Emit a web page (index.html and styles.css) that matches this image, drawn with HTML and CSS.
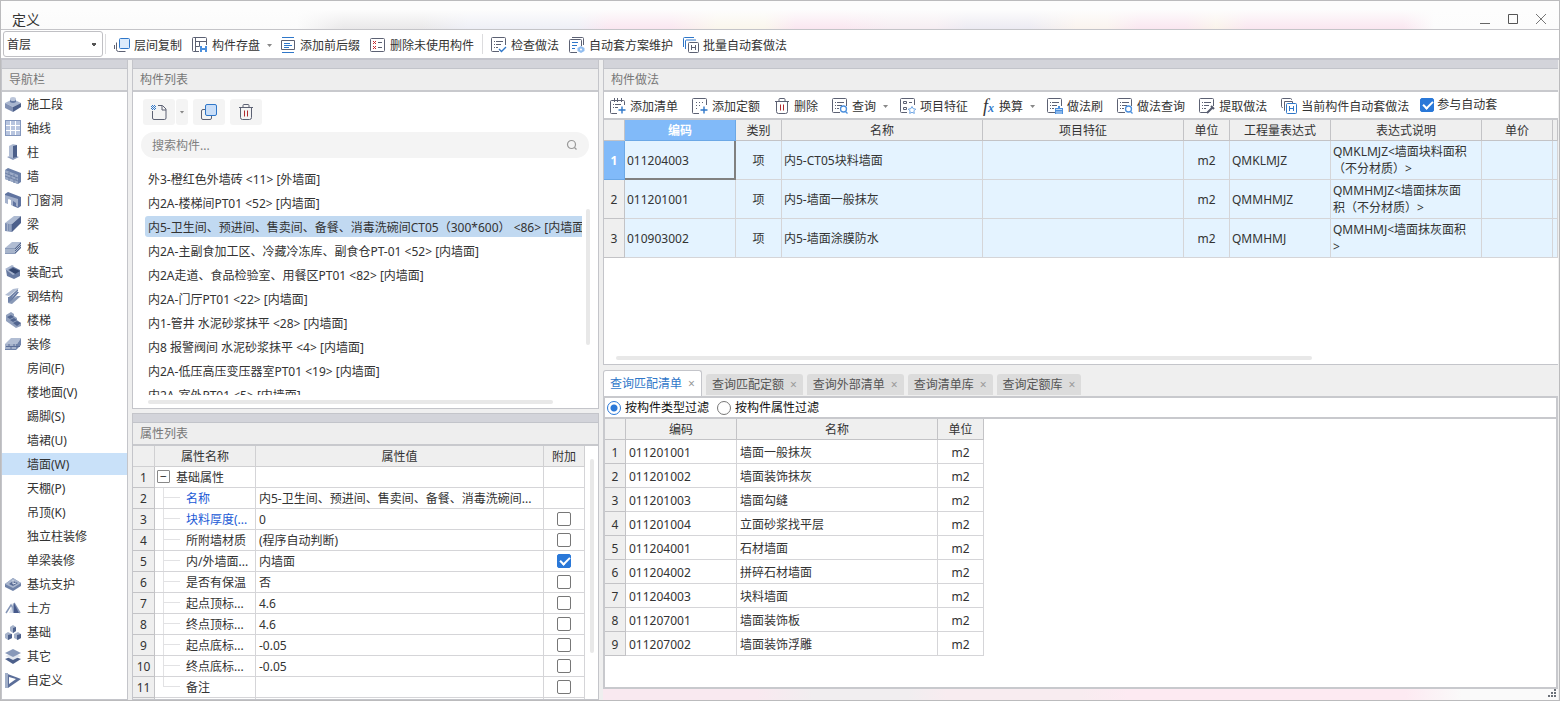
FILE: index.html
```html
<!DOCTYPE html>
<html lang="zh-CN">
<head>
<meta charset="utf-8">
<title>定义</title>
<link rel="stylesheet" href="styles.css">
</head>
<body>
<svg class="sprite" aria-hidden="true">
  <defs>
    <pattern id="dots" width="2" height="2" patternUnits="userSpaceOnUse"><path d="M0 0h1v1H0zM1 1h1v1H1z" fill="#2f77c9"/></pattern>
    <symbol id="i-layers" viewBox="0 0 16 16"><path d="M2.500 5.500v7q0 2 2 2h7M.5 8v4" class="k"/><rect x="5.500" y="1.500" width="10" height="10" rx="1" fill="#dcebfb" stroke="#2f77c9"/></symbol>
    <symbol id="i-store" viewBox="0 0 16 16"><path d="M7 14.500H1.500q-1 0-1-1v-12q0-1 1-1h12q1 0 1 1V8M3.500 1v13M3.500 4.500h11M7.500 4.500v5M3.500 9.500h4" class="k"/><path d="M8 9h7v6H8z" fill="#4b8fdd"/><path d="M10 9h3v2h-3zM10 13h3v2h-3z" fill="#fff"/></symbol>
    <symbol id="i-affix" viewBox="0 0 16 16"><path d="M1.500 3.500h13v9h-13z" class="k"/><path d="M4 6.500h6M4 8.500h8M4 10.500h5M2 .5h12M2 15.500h12" class="b"/></symbol>
    <symbol id="i-unused" viewBox="0 0 16 16"><rect x=".5" y="1.500" width="14" height="13" rx="1" class="k"/><path d="m3 4 3 3m0-3-3 3m0 2 3 3m0-3-3 3" stroke="#c6282c"/><path d="M8 5.500h4M8 10.500h4" class="k"/></symbol>
    <symbol id="i-doc" viewBox="0 0 16 16"><path d="M8 14.500H1.500q-1 0-1-1v-12q0-1 1-1h12q1 0 1 1V8" class="k"/><path d="M3 4.500h1M5 4.500h7M3 7.500h1M5 7.500h5M3 10.500h1M5 10.500h2" class="k"/></symbol>
    <symbol id="i-check" viewBox="0 0 16 16"><use href="#i-doc"/><path d="m8 12 2.500 2.500L15 10" class="b w"/></symbol>
    <symbol id="i-plan" viewBox="0 0 16 16"><path d="M8 15.500H1.500q-1 0-1-1v-11q0-1 1-1h10q1 0 1 1V9M3 .5h10.500q1 0 1 1V8" class="k"/><path d="M3 5.500h6M3 8.500h5M3 11.500h3" class="b"/><path d="M12 9 15.500 11v3L12 16l-3.500-2v-3z" fill="#91bdf0"/><circle cx="12" cy="12.500" r="1" fill="#fff"/></symbol>
    <symbol id="i-batch" viewBox="0 0 16 16"><path d="M.5 10V1.500q0-1 1-1H11M2.500 12V4q0-1 1-1H13" class="b"/><rect x="5.500" y="5.500" width="10" height="10" rx="1" class="k f"/><path d="M8.500 8v5M12.500 8v5M8.500 10.500h4" class="k"/></symbol>
    <symbol id="i-new" viewBox="0 0 16 16"><path d="M1.500 7v7q0 1.500 1.500 1.500h10.500q1.500 0 1.500-1.500V5l-3.500-3.500H7M11 2v4h4" class="k"/><path d="M0 1h5v5H0z" fill="url(#dots)"/></symbol>
    <symbol id="i-copy" viewBox="0 0 16 16"><path d="M4 5.500H2q-1.500 0-1.500 1.500v7q0 1.500 1.500 1.500h7q1.500 0 1.500-1.500v-2" class="k"/><rect x="4.500" y=".5" width="11" height="11" rx="1.500" fill="#c9def8" stroke="#2f77c9"/></symbol>
    <symbol id="i-trash" viewBox="0 0 16 16"><path d="M1 3.500h14M5 3V1.500q0-1 1-1h4q1 0 1 1V3M2.500 4v9.500q0 2 2 2h7q2 0 2-2V4" class="k"/><path d="M6.500 6.500v6M9.500 6.500v6" stroke="#b02a2e"/></symbol>
    <symbol id="i-addlist" viewBox="0 0 16 16"><path d="M7 15.500H1.500q-1 0-1-1v-11q0-1 1-1h12q1 0 1 1V7M4.500 0v4M7.500 0v4M11.500 0v4M3 6.500h1M5 6.500h6M3 9.500h1M5 9.500h3" class="k"/><path d="M12 8.500v7M8.500 12h7" class="b w"/></symbol>
    <symbol id="i-addquota" viewBox="0 0 16 16"><path d="M7 15.500H1.500q-1 0-1-1v-13q0-1 1-1h12q1 0 1 1V7" class="k"/><path d="M4 4.500h8M4 7.500h5M4 10.500h3" class="k" stroke-dasharray="1 2"/><path d="M12 8.500v7M8.500 12h7" class="b w"/></symbol>
    <symbol id="i-query" viewBox="0 0 16 16"><use href="#i-doc"/><circle cx="11.500" cy="11" r="3" fill="#fff" stroke="#4b8fdd" stroke-width="1.300"/><path d="m13.500 13.500 2 2" stroke="#4b8fdd" stroke-width="1.300"/></symbol>
    <symbol id="i-feature" viewBox="0 0 16 16"><path d="M7 14.500H1.500q-1 0-1-1v-12q0-1 1-1h12q1 0 1 1V7M3.500 3.500h3v2h-3zM3.500 9.500h3v2h-3zM9 4.500h3" class="k"/><path d="m12 8.500 1.200 2.200 2.500.4-1.800 1.800.4 2.500-2.300-1.100-2.300 1.100.4-2.500-1.800-1.800 2.500-.4z" fill="#fff" stroke="#4b8fdd" stroke-width=".8"/></symbol>
    <symbol id="i-brush" viewBox="0 0 16 16"><use href="#i-doc"/><path d="M11 8h2v2h3v6H8v-6h3z" fill="#4b8fdd"/><path d="M9 11.500h6M10 13v3M12 13v3M14 13v3" stroke="#fff" stroke-width=".7"/></symbol>
    <symbol id="i-extract" viewBox="0 0 16 16"><use href="#i-doc"/><path d="m8 15 5-5m-1-2 3 3" stroke="#555b6e" stroke-width="2"/></symbol>
    <symbol id="i-auto" viewBox="0 0 16 16"><path d="M2 9.500H1.500q-1 0-1-1v-7q0-1 1-1h8q1 0 1 1V2M4 12.500H3.500v-9h8V5" class="k"/><rect x="5.500" y="5.500" width="10" height="10" rx="1" fill="#fff" stroke="#2f77c9"/><path d="M8.500 8v5M12.500 8v5M8.500 10.500h4" class="b"/></symbol>

    <symbol id="n-stage" viewBox="0 0 16 16"><path d="m0 7 8-4 8 4-8 4z" fill="#a9b6cf"/><path d="m0 7 8 4v5l-8-4z" fill="#8291b3"/><path d="m16 7-8 4v5l8-5z" fill="#4d608b"/><path d="M5 3v3q3 2 6 0V3z" fill="#6579a2"/><ellipse cx="8" cy="3" rx="3" ry="2" fill="#bcc6da"/></symbol>
    <symbol id="n-grid" viewBox="0 0 16 16"><path d="M0 0h16v16H0z" fill="#8497bd"/><path d="M1 1h14v14H1z" fill="#b8c5df"/><path d="M5.500 1v14M10.500 1v14M1 5.500h14M1 10.500h14" stroke="#fff"/></symbol>
    <symbol id="n-column" viewBox="0 0 16 16"><path d="m2 13 6-2 6 2-6 3z" fill="#8b9bbb"/><path d="m4 2 4-2 4 1v12l-4 1-4-1z" fill="#b1bdd4"/><path d="m8 2 4-1v12l-4 1z" fill="#4d608b"/></symbol>
    <symbol id="n-wall" viewBox="0 0 16 16"><path d="m0 2 3-2 13 5v9l-3 2L0 11z" fill="#6c80a8"/><path d="m0 2 13 5v9L0 11z" fill="#9baac6"/><path d="m0 5 13 5M0 8l13 5M4 4v3m5-1v3M6 7v3m5-1v3M4 10v3m5-1v3" stroke="#66799f" stroke-width=".8"/></symbol>
    <symbol id="n-door" viewBox="0 0 16 16"><path d="m0 2 3-2 13 5v9l-3 2-5-2V9L4 7v5l-4-2z" fill="#6074a0"/><path d="m0 3 13 4v8l-2-1v-3L8 9v5l-2-1V8L3 7v5l-3-1z" fill="#a4b1cb"/><path d="m3 7 3 1v5l-3-1z" fill="#fff"/></symbol>
    <symbol id="n-beam" viewBox="0 0 16 16"><path d="m0 7 9-7h7l-9 8z" fill="#aebbd2"/><path d="m7 8 9-8v7l-9 9z" fill="#4d608b"/><path d="m0 7 7 1v8l-7-1z" fill="#7f90b3"/><path d="M2.500 8v7M5 8v7" stroke="#a5b2ca"/></symbol>
    <symbol id="n-slab" viewBox="0 0 16 16"><path d="m0 8 7-6h9l-6 6z" fill="#b1bdd3"/><path d="M0 8h10v6H0z" fill="#8b9bb9"/><path d="m10 8 6-6v6l-6 6z" fill="#536790"/><path d="M0 10h10l6-6M0 12h10l6-6" stroke="#dce2ec" stroke-width=".7" fill="none"/></symbol>
    <symbol id="n-prefab" viewBox="0 0 16 16"><path d="m1 6 6-4 8 4v6l-6 3-7-3z" fill="#687ba2"/><path d="m4 6 4-2 7 3-5 3z" fill="#34476f"/><path d="m0 5 7-4 2 1-6 4 7 4-2 1z" fill="#a9b6cf"/></symbol>
    <symbol id="n-steel" viewBox="0 0 16 16"><path d="m0 7 8-6 6-1-10 8z" fill="#b1bdd3"/><path d="m4 13 8-9h2l-8 10z" fill="#61759f"/><path d="m3 15 9-7 4 0-9 8z" fill="#8999b7"/><path d="m4 9 9-8v2L8 8l-2 5-3 2V9z" fill="#6f82a8"/></symbol>
    <symbol id="n-stair" viewBox="0 0 16 16"><path d="m1 3 5-3 3 2v2l3 2v2l4 3v3l-5 2L1 9z" fill="#91a0bd"/><path d="m2 5 4-2 3 2-4 2zM5 8l4-2 3 2-4 2zM8 11l4-2 4 2-4 3z" fill="#51658f"/></symbol>
    <symbol id="n-decor" viewBox="0 0 16 16"><path d="m0 8 6-6h10l-4 6z" fill="#b1bdd3"/><path d="M0 8h12l4-6v7l-5 5H0z" fill="#7184aa"/><path d="M0 8h11v5H0z" fill="#a5b2ca"/><path d="M1 10.500h14M4 8v2m5-2v2m-3 0v3" stroke="#5c6f98"/></symbol>
    <symbol id="n-pit" viewBox="0 0 16 16"><path d="m0 8 8-6 8 5v3l-8 5-8-4z" fill="#6f82a8"/><path d="m0 8 8-6 8 5-8 5z" fill="#a8b5cd"/><path d="m4 8 4-3 5 2-5 3z" fill="#5a6d96"/><path d="M8 4v4l3-1" stroke="#dce3ee" fill="none"/></symbol>
    <symbol id="n-earth" viewBox="0 0 16 16"><path d="m1 13 5-8 2 4M9 3l6 10" fill="none" stroke="#8495b6" stroke-width="1.500"/><path d="m8 3 6 10H6z" fill="#8495b6"/><path d="m9 3 5 10h-5z" fill="#46598a"/><path d="m7 6-3 7h4z" fill="#d7deea"/></symbol>
    <symbol id="n-base" viewBox="0 0 16 16"><path d="m5 3 3-2 3 2v4L8 9 5 7zM0 10l3-2 4 2v4l-4 2-3-2zM9 10l4-2 3 2v4l-3 2-4-2z" fill="#a5b2ca"/><path d="m8 4 3-1v4L8 9zM3 11l4-1v4l-4 2zM12 11l4-1v4l-4 2z" fill="#4d608b"/></symbol>
    <symbol id="n-other" viewBox="0 0 16 16"><path d="m0 11 8-3 8 3-8 5z" fill="#4d608b"/><path d="m0 8 8-3 8 3-8 4z" fill="#e1e6ef"/><path d="m0 5 8-4 8 4-8 4z" fill="#8798b9"/></symbol>
    <symbol id="n-custom" viewBox="0 0 16 16"><path d="m0 1 16 6-13 9H0z" fill="#5b6e99"/><path d="m4 5 7 2-7 5z" fill="#fff"/><path d="M0 1h3v15H0z" fill="#a0aec8"/></symbol>
  </defs>
</svg>

<div class="window">
  <header class="titlebar">
    <h1 class="title">定义</h1>
    <div class="winbtns">
      <button type="button" aria-label="最小化"><svg viewBox="0 0 12 12"><path d="M1 10.500h10" stroke="#666"/></svg></button>
      <button type="button" aria-label="最大化"><svg viewBox="0 0 12 12"><path d="M1.500 1.500h9v9h-9z" stroke="#555" fill="none"/></svg></button>
      <button type="button" aria-label="关闭"><svg viewBox="0 0 12 12"><path d="m1 1 10 10M11 1 1 11" stroke="#777"/></svg></button>
    </div>
  </header>

  <div class="toolbar">
    <select class="floor" aria-label="楼层"><option>首层</option></select>
    <span class="sep"></span>
    <button type="button" class="tool"><svg><use href="#i-layers"/></svg>层间复制</button>
    <button type="button" class="tool"><svg><use href="#i-store"/></svg>构件存盘<i class="caret"></i></button>
    <button type="button" class="tool"><svg><use href="#i-affix"/></svg>添加前后缀</button>
    <button type="button" class="tool"><svg><use href="#i-unused"/></svg>删除未使用构件</button>
    <span class="sep"></span>
    <button type="button" class="tool"><svg><use href="#i-check"/></svg>检查做法</button>
    <button type="button" class="tool"><svg><use href="#i-plan"/></svg>自动套方案维护</button>
    <button type="button" class="tool"><svg><use href="#i-batch"/></svg>批量自动套做法</button>
  </div>

  <main class="main">
    <nav class="panel nav">
      <div class="strip"></div>
      <h2 class="head">导航栏</h2>
      <ul class="navlist">
        <li><a href="#"><svg><use href="#n-stage"/></svg>施工段</a></li>
        <li><a href="#"><svg><use href="#n-grid"/></svg>轴线</a></li>
        <li><a href="#"><svg><use href="#n-column"/></svg>柱</a></li>
        <li><a href="#"><svg><use href="#n-wall"/></svg>墙</a></li>
        <li><a href="#"><svg><use href="#n-door"/></svg>门窗洞</a></li>
        <li><a href="#"><svg><use href="#n-beam"/></svg>梁</a></li>
        <li><a href="#"><svg><use href="#n-slab"/></svg>板</a></li>
        <li><a href="#"><svg><use href="#n-prefab"/></svg>装配式</a></li>
        <li><a href="#"><svg><use href="#n-steel"/></svg>钢结构</a></li>
        <li><a href="#"><svg><use href="#n-stair"/></svg>楼梯</a></li>
        <li><a href="#"><svg><use href="#n-decor"/></svg>装修</a></li>
        <li><a href="#" class="sub">房间(F)</a></li>
        <li><a href="#" class="sub">楼地面(V)</a></li>
        <li><a href="#" class="sub">踢脚(S)</a></li>
        <li><a href="#" class="sub">墙裙(U)</a></li>
        <li><a href="#" class="sub current">墙面(W)</a></li>
        <li><a href="#" class="sub">天棚(P)</a></li>
        <li><a href="#" class="sub">吊顶(K)</a></li>
        <li><a href="#" class="sub">独立柱装修</a></li>
        <li><a href="#" class="sub">单梁装修</a></li>
        <li><a href="#"><svg><use href="#n-pit"/></svg>基坑支护</a></li>
        <li><a href="#"><svg><use href="#n-earth"/></svg>土方</a></li>
        <li><a href="#"><svg><use href="#n-base"/></svg>基础</a></li>
        <li><a href="#"><svg><use href="#n-other"/></svg>其它</a></li>
        <li><a href="#"><svg><use href="#n-custom"/></svg>自定义</a></li>
      </ul>
    </nav>

    <div class="middle">
      <section class="panel comps">
        <div class="strip"></div>
        <h2 class="head">构件列表</h2>
        <div class="compbtns">
          <div class="split">
            <button type="button" class="soft" aria-label="新建"><svg><use href="#i-new"/></svg></button>
            <button type="button" class="soft drop" aria-label="更多新建"><i class="caret"></i></button>
          </div>
          <button type="button" class="soft" aria-label="复制"><svg><use href="#i-copy"/></svg></button>
          <button type="button" class="soft" aria-label="删除"><svg><use href="#i-trash"/></svg></button>
        </div>
        <label class="search">
          <input type="text" placeholder="搜索构件..." aria-label="搜索构件">
          <svg viewBox="0 0 12 12"><circle cx="5.500" cy="5.500" r="4" fill="none" stroke="#999" stroke-width="1.200"/><path d="m8.500 8.500 2 2" stroke="#999" stroke-width="1.200"/></svg>
        </label>
        <div class="listwrap">
          <ul class="complist">
            <li>外3-橙红色外墙砖 &lt;11&gt; [外墙面]</li>
            <li>内2A-楼梯间PT01 &lt;52&gt; [内墙面]</li>
            <li class="picked">内5-卫生间、预进间、售卖间、备餐、消毒洗碗间CT05（300*600） &lt;86&gt; [内墙面]</li>
            <li>内2A-主副食加工区、冷藏冷冻库、副食仓PT-01 &lt;52&gt; [内墙面]</li>
            <li>内2A走道、食品检验室、用餐区PT01 &lt;82&gt; [内墙面]</li>
            <li>内2A-门厅PT01 &lt;22&gt; [内墙面]</li>
            <li>内1-管井 水泥砂浆抹平 &lt;28&gt; [内墙面]</li>
            <li>内8 报警阀间 水泥砂浆抹平 &lt;4&gt; [内墙面]</li>
            <li>内2A-低压高压变压器室PT01 &lt;19&gt; [内墙面]</li>
            <li>内2A-室外PT01 &lt;5&gt; [内墙面]</li>
          </ul>
          <div class="vbar listbar"><i></i></div>
        </div>
        <div class="hbar comphbar"><i></i></div>
      </section>

      <section class="panel props">
        <div class="strip"></div>
        <h2 class="head">属性列表</h2>
        <div class="propwrap">
          <table class="grid proptable">
            <colgroup><col class="c-num"><col class="c-pname"><col><col class="c-add"></colgroup>
            <thead><tr><th></th><th>属性名称</th><th>属性值</th><th>附加</th></tr></thead>
            <tbody>
              <tr><th>1</th><td class="group"><button type="button" class="fold" aria-label="折叠">−</button>基础属性</td><td></td><td></td></tr>
              <tr><th>2</th><td class="leaf blue">名称</td><td>内5-卫生间、预进间、售卖间、备餐、消毒洗碗间...</td><td></td></tr>
              <tr><th>3</th><td class="leaf blue">块料厚度(...</td><td>0</td><td class="mid"><input type="checkbox" aria-label="块料厚度"></td></tr>
              <tr><th>4</th><td class="leaf">所附墙材质</td><td>(程序自动判断)</td><td class="mid"><input type="checkbox" aria-label="所附墙材质"></td></tr>
              <tr><th>5</th><td class="leaf">内/外墙面...</td><td>内墙面</td><td class="mid"><input type="checkbox" checked aria-label="内/外墙面标志"></td></tr>
              <tr><th>6</th><td class="leaf">是否有保温</td><td>否</td><td class="mid"><input type="checkbox" aria-label="是否有保温"></td></tr>
              <tr><th>7</th><td class="leaf">起点顶标...</td><td>4.6</td><td class="mid"><input type="checkbox" aria-label="起点顶标高"></td></tr>
              <tr><th>8</th><td class="leaf">终点顶标...</td><td>4.6</td><td class="mid"><input type="checkbox" aria-label="终点顶标高"></td></tr>
              <tr><th>9</th><td class="leaf">起点底标...</td><td>-0.05</td><td class="mid"><input type="checkbox" aria-label="起点底标高"></td></tr>
              <tr><th>10</th><td class="leaf">终点底标...</td><td>-0.05</td><td class="mid"><input type="checkbox" aria-label="终点底标高"></td></tr>
              <tr><th>11</th><td class="leaf last">备注</td><td></td><td class="mid"><input type="checkbox" aria-label="备注"></td></tr>
              <tr><th></th><td></td><td></td><td></td></tr>
            </tbody>
          </table>
          <div class="vbar propbar"><i></i></div>
        </div>
      </section>
    </div>

    <div class="right">
      <section class="panel works">
        <div class="strip"></div>
        <h2 class="head">构件做法</h2>
        <div class="worktools">
          <button type="button" class="tool"><svg><use href="#i-addlist"/></svg>添加清单</button>
          <button type="button" class="tool"><svg><use href="#i-addquota"/></svg>添加定额</button>
          <button type="button" class="tool"><svg><use href="#i-trash"/></svg>删除</button>
          <button type="button" class="tool"><svg><use href="#i-query"/></svg>查询<i class="caret"></i></button>
          <button type="button" class="tool"><svg><use href="#i-feature"/></svg>项目特征</button>
          <button type="button" class="tool"><span class="fx">f<b>x</b></span>换算<i class="caret"></i></button>
          <button type="button" class="tool"><svg><use href="#i-brush"/></svg>做法刷</button>
          <button type="button" class="tool"><svg><use href="#i-query"/></svg>做法查询</button>
          <button type="button" class="tool"><svg><use href="#i-extract"/></svg>提取做法</button>
          <button type="button" class="tool"><svg><use href="#i-auto"/></svg>当前构件自动套做法</button>
          <label class="join"><input type="checkbox" checked>参与自动套</label>
        </div>
        <table class="grid worktable">
          <colgroup><col class="c-idx"><col class="c-code"><col class="c-kind"><col class="c-name"><col class="c-name"><col class="c-kind"><col class="c-expr"><col class="c-note"><col class="c-price"><col></colgroup>
          <thead><tr><th></th><th class="on">编码</th><th>类别</th><th>名称</th><th>项目特征</th><th>单位</th><th>工程量表达式</th><th>表达式说明</th><th>单价</th><th></th></tr></thead>
          <tbody>
            <tr><th class="on">1</th><td class="focus">011204003</td><td class="mid">项</td><td>内5-CT05块料墙面</td><td></td><td class="mid">m2</td><td>QMKLMJZ</td><td class="wrap">QMKLMJZ&lt;墙面块料面积<br>（不分材质）&gt;</td><td></td><td></td></tr>
            <tr><th>2</th><td>011201001</td><td class="mid">项</td><td>内5-墙面一般抹灰</td><td></td><td class="mid">m2</td><td>QMMHMJZ</td><td class="wrap">QMMHMJZ&lt;墙面抹灰面<br>积（不分材质）&gt;</td><td></td><td></td></tr>
            <tr><th>3</th><td>010903002</td><td class="mid">项</td><td>内5-墙面涂膜防水</td><td></td><td class="mid">m2</td><td>QMMHMJ</td><td class="wrap">QMMHMJ&lt;墙面抹灰面积<br>&gt;</td><td></td><td></td></tr>
          </tbody>
        </table>
        <div class="hbar workhbar"><i></i></div>
      </section>

      <div class="tabs">
        <button type="button" class="tab active">查询匹配清单<span>×</span></button>
        <button type="button" class="tab">查询匹配定额<span>×</span></button>
        <button type="button" class="tab">查询外部清单<span>×</span></button>
        <button type="button" class="tab">查询清单库<span>×</span></button>
        <button type="button" class="tab">查询定额库<span>×</span></button>
      </div>

      <section class="query">
        <div class="filters">
          <label><input type="radio" name="filter" checked>按构件类型过滤</label>
          <label><input type="radio" name="filter">按构件属性过滤</label>
        </div>
        <table class="grid querytable">
          <colgroup><col class="c-idx"><col class="c-code"><col class="c-name"><col class="c-kind"></colgroup>
          <thead><tr><th></th><th>编码</th><th>名称</th><th>单位</th></tr></thead>
          <tbody>
            <tr><th>1</th><td>011201001</td><td>墙面一般抹灰</td><td class="mid">m2</td></tr>
            <tr><th>2</th><td>011201002</td><td>墙面装饰抹灰</td><td class="mid">m2</td></tr>
            <tr><th>3</th><td>011201003</td><td>墙面勾缝</td><td class="mid">m2</td></tr>
            <tr><th>4</th><td>011201004</td><td>立面砂浆找平层</td><td class="mid">m2</td></tr>
            <tr><th>5</th><td>011204001</td><td>石材墙面</td><td class="mid">m2</td></tr>
            <tr><th>6</th><td>011204002</td><td>拼碎石材墙面</td><td class="mid">m2</td></tr>
            <tr><th>7</th><td>011204003</td><td>块料墙面</td><td class="mid">m2</td></tr>
            <tr><th>8</th><td>011207001</td><td>墙面装饰板</td><td class="mid">m2</td></tr>
            <tr><th>9</th><td>011207002</td><td>墙面装饰浮雕</td><td class="mid">m2</td></tr>
          </tbody>
        </table>
      </section>
      <footer class="foot"><svg viewBox="0 0 8 8"><path d="M6 0h2v2H6zM6 3h2v2H6zM6 6h2v2H6zM3 3h2v2H3zM3 6h2v2H3zM0 6h2v2H0z" fill="#6b7078"/></svg></footer>
    </div>
  </main>
</div>
</body>
</html>
```
FILE: styles.css
```css
* { box-sizing: border-box; }

html, body { height: 100%; }

body {
  margin: 0;
  font: 12px/16px "Noto Sans", "Noto Sans CJK SC", sans-serif;
  color: #333;
  background: #efefef;
}

button, input, select { font: inherit; color: inherit; }
button { margin: 0; padding: 0; border: 0; background: none; white-space: nowrap; }
ul { margin: 0; padding: 0; list-style: none; }
h1, h2 { margin: 0; font: inherit; }

.sprite { position: absolute; width: 0; height: 0; }
.k { fill: none; stroke: #5c6173; }
.k.f { fill: #fff; }
.b { fill: none; stroke: #2f77c9; }
.w { stroke-width: 1.4; }

.window {
  display: flex;
  flex-direction: column;
  height: 100%;
  min-height: 0;
  border: 1px solid #bbbbbd;
  overflow: hidden;
}

.titlebar {
  display: flex;
  flex: none;
  align-items: flex-end;
  justify-content: space-between;
  height: 29px;
  padding: 0 12px 0 11px;
  border-bottom: 1px solid #c4c4c8;
  background:
    linear-gradient(#fdfdfd 30%, rgba(253, 253, 253, 0)),
    linear-gradient(90deg, #fbfbfb 0 19%, #e9e8e9 22% 27%, #eeeff6 30% 37%, #fae6f0 39% 43%, #faf6ec 46% 49%, #fae6f0 51% 54%, #f6edf2 57% 60%, #eceaf2 62% 66%, #faf3ee 69% 71%, #fae6f0 73% 76%, #faf3ea 78%, #fae6f0 80% 90%, #fcfcfc 92%);
}
.title { font-size: 14px; line-height: 18px; }
.winbtns { display: flex; gap: 16px; padding-bottom: 4px; }
.winbtns button { width: 12px; height: 12px; }
.winbtns svg { display: block; width: 12px; height: 12px; }

.toolbar {
  display: flex;
  flex: none;
  align-items: center;
  gap: 10px;
  height: 30px;
  padding: 0 2px;
  border-bottom: 2px solid #c4c5cc;
  background: #fff;
}
.floor {
  appearance: none;
  width: 100px;
  height: 26px;
  margin-right: -6px;
  padding: 2px 3px 0;
  border: 1px solid #c0c0c4;
  border-radius: 3px;
  background: conic-gradient(from -45deg at 50% 100%, #555 90deg, transparent 0) right 5px center / 6px 3px no-repeat #fff;
}
.sep { width: 1px; height: 20px; margin: 0 -2px; background: #dcdcde; }
.tool { display: flex; align-items: center; gap: 4px; padding-top: 3px; }
.tool svg { width: 16px; height: 16px; margin-top: -2px; }
.caret {
  width: 5px;
  height: 3px;
  margin: 0 -2px 0 3px;
  background: #888;
  clip-path: polygon(0 0, 100% 0, 50% 100%);
}

.main { display: flex; flex: 1; gap: 4px; min-height: 0; padding-right: 1px; }

.panel {
  display: flex;
  flex-direction: column;
  min-height: 0;
  border: solid #c4c5ca;
  border-width: 0 1px 1px;
  background: #fff;
}
.strip { flex: none; height: 9px; border-bottom: 1px solid #c2c4ca; background: #d3d4da; }
.head {
  flex: none;
  height: 23px;
  padding: 0 7px;
  border-bottom: 2px solid #c8c9cd;
  background: #eee;
  color: #777;
  line-height: 22px;
}

.nav { flex: none; width: 127px; }
.navlist { display: flex; flex-direction: column; overflow: hidden; padding-top: 1px; gap: 2px; }
.navlist a {
  display: flex;
  align-items: center;
  gap: 6px;
  height: 22px;
  padding: 2px 0 0 3px;
  color: #333;
  text-decoration: none;
}
.navlist svg { width: 16px; height: 16px; margin-top: -2px; }
.navlist .sub { padding-left: 25px; }
.navlist .current { background: #c9e1f9; }

.middle { display: flex; flex: none; flex-direction: column; gap: 4px; width: 467px; }
.comps { flex: 349; }
.props { flex: 286; border-top-width: 1px; }

.compbtns { display: flex; gap: 5px; padding: 7px 10px; }
.split { display: flex; gap: 1px; }
.soft {
  display: grid;
  place-items: center;
  width: 32px;
  height: 26px;
  border-radius: 3px;
  background: #f4f4f4;
}
.soft svg { width: 16px; height: 16px; }
.soft.drop { width: 12px; }
.soft .caret { margin: 0; }

.search {
  display: flex;
  flex: none;
  align-items: center;
  height: 26px;
  margin: 0 9px 0 8px;
  padding: 0 11px;
  border-radius: 13px;
  background: #f4f4f4;
}
.search input { flex: 1; min-width: 0; padding: 2px 0 0; border: 0; outline: 0; background: none; }
.search input::placeholder { color: #808080; opacity: 1; }
.search svg { width: 12px; height: 12px; }

.listwrap {
  display: flex;
  flex: 1;
  gap: 4px;
  min-height: 0;
  padding: 10px 8px 0 12px;
}
.complist { display: flex; flex: 1; flex-direction: column; gap: 3px; min-width: 0; overflow: hidden; }
.complist li {
  flex: none;
  height: 21px;
  padding: 1px 3px 0;
  border-radius: 3px 0 0 3px;
  line-height: 22px;
  white-space: pre;
  overflow: hidden;
}
.complist .picked { background: #c1d9f1; }
.vbar { flex: none; width: 4px; }
.vbar i, .hbar i { display: block; border-radius: 2px; background: #e8e8e8; }
.listbar i { height: 60%; margin-top: 41px; }
.hbar { flex: none; }
.hbar i { height: 4px; }
.comphbar { padding: 5px 45px 4px 15px; }

.propwrap { display: flex; min-height: 0; overflow: hidden; gap: 5px; padding-right: 4px; }
.propbar i { height: 194px; margin-top: 13px; }

.grid { border-collapse: separate; border-spacing: 0; table-layout: fixed; }
.grid th, .grid td {
  padding: 2px 3px 0;
  border: solid #d5d5d8;
  border-width: 0 1px 1px 0;
  font-weight: normal;
  text-align: left;
  white-space: nowrap;
  overflow: hidden;
}
.grid th { padding: 2px 0 0; border-color: #c3c3c6; background: #efefef; text-align: center; }
.grid td.mid { padding: 2px 0 0; text-align: center; }
.grid thead tr { height: 21px; }

.proptable { flex: 1; min-width: 0; width: 0; }
.proptable thead th { border-color: #d0d0d2; }
.proptable tr { height: 21px; }
.proptable td.mid { padding: 0; }
.c-num { width: 22px; }
.c-pname { width: 101px; }
.c-add { width: 41px; }
.proptable .group { padding-left: 2px; }
.fold {
  width: 13px;
  height: 13px;
  margin-right: 6px;
  border: 1px solid #888;
  border-radius: 1px;
  line-height: 10px;
  vertical-align: 1px;
}
.proptable .leaf {
  padding-left: 31px;
  padding-right: 0;
  background:
    linear-gradient(#e2e2e4, #e2e2e4) 8px 9px / 17px 1px no-repeat,
    linear-gradient(#e2e2e4, #e2e2e4) 8px 0 / 1px 100% no-repeat;
}
.proptable .leaf.last {
  background:
    linear-gradient(#e2e2e4, #e2e2e4) 8px 9px / 17px 1px no-repeat,
    linear-gradient(#e2e2e4, #e2e2e4) 8px 0 / 1px 9px no-repeat;
}
.blue { color: #2159d6; }

input[type="checkbox"] {
  appearance: none;
  display: block;
  width: 14px;
  height: 14px;
  margin: 0 auto;
  border: 1px solid #777;
  border-radius: 2px;
  background: #fff;
}
input[type="checkbox"]:checked { border-color: #2a78d8; background: #2a78d8; }
input[type="checkbox"]:checked::before {
  content: "";
  display: block;
  width: 8px;
  height: 4px;
  margin: 2px;
  border: solid #fff;
  border-width: 0 0 2px 2px;
  transform: rotate(-45deg);
}

.right { display: flex; flex: 1; flex-direction: column; min-width: 0; }
.works { flex: 307; border-right-width: 0; }
.worktools {
  display: flex;
  flex: none;
  align-items: center;
  gap: 14px;
  height: 28px;
  padding: 0 6px;
  border-bottom: 2px solid #c8c9cd;
}
.join { display: flex; align-items: center; gap: 3px; margin-left: -3px; white-space: nowrap; }
.fx { width: 13px; font: italic 18px/16px "Liberation Serif", serif; }
.fx b { color: #2f77c9; font-size: 12px; }

.c-idx { width: 21px; }
.c-code { width: 111px; }
.c-kind { width: 46px; }
.c-name { width: 201px; }
.c-expr { width: 101px; }
.c-note { width: 151px; }
.c-price { width: 71px; }
.worktable { flex: none; width: 100%; }
.worktable tbody tr { height: 39px; }
.worktable td { padding-left: 2px; background: #e4f3ff; }
.worktable td.wrap { padding: 0 2px; line-height: 17px; }
.grid th.on { border-color: #6ca8e6; background: #81baf9; color: #fff; font-weight: bold; }
.worktable td.focus { border: solid #808080; border-width: 0 2px 2px 0; }
.workhbar { margin-top: auto; padding: 0 246px 4px 12px; }

.tabs { display: flex; flex: none; align-items: flex-end; gap: 4px; padding-top: 5px; }
.tab {
  display: flex;
  align-items: center;
  gap: 6px;
  height: 21px;
  margin-bottom: 1px;
  padding: 0 6px;
  border-radius: 3px 3px 0 0;
  background: #dcdcdc;
  color: #555;
}
.tab span { color: #999; }
.tab.active {
  height: 26px;
  margin: 0;
  border: solid #c4c5ca;
  border-width: 1px 1px 0;
  background: #fff;
  color: #2f77c9;
}

.query { flex: 291; min-height: 0; border: 2px solid #c8c9cd; background: #fff; }
.filters { display: flex; align-items: center; gap: 8px; height: 21px; padding: 0 2px; border-bottom: 2px solid #c8c9cd; color: #111; }
.filters label { display: flex; align-items: center; gap: 4px; }
input[type="radio"] {
  appearance: none;
  width: 14px;
  height: 14px;
  margin: 0;
  border: 1px solid #777;
  border-radius: 50%;
  background: #fff;
}
input[type="radio"]:checked { border-color: #2a78d8; background: radial-gradient(circle, #2a78d8 3px, #fff 4px); }

.querytable { width: 379px; }
.querytable tbody tr { height: 24px; }

.foot {
  display: flex;
  flex: none;
  justify-content: flex-end;
  height: 11px;
  padding-right: 2px;
  background: linear-gradient(90deg, #f9e9f0 0 16%, #f1eef0 22% 32%, #f8ecf0 36% 50%, #fdeaf2 55% 84%, #fafafa 90%);
}
.foot svg { width: 8px; height: 8px; }
```
